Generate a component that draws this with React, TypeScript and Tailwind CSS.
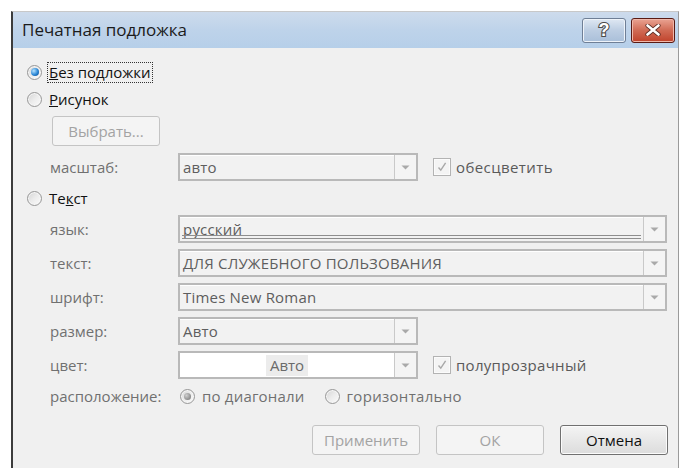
import React from "react";

const FONT = "font-['Open_Sans','Noto_Sans',sans-serif]";

function Radio({ checked = false, disabled = false }: { checked?: boolean; disabled?: boolean }) {
  return (
    <span className="flex h-[15px] w-[15px] shrink-0 items-center justify-center rounded-full border border-[#979797] bg-gradient-to-br from-[#d4d4d4] via-[#ececec] to-[#fbfbfb] shadow-[inset_0_0_0_1px_#f6f6f6]">
      {checked &&
        (disabled ? (
          <span className="h-[7px] w-[7px] rounded-full bg-[radial-gradient(circle_at_35%_35%,#cfcfcf,#8c8c8c_70%,#6e6e6e)]" />
        ) : (
          <span className="h-[8px] w-[8px] rounded-full bg-[radial-gradient(circle_at_35%_35%,#b7e3ff,#2a87d6_55%,#0d3f7e)]" />
        ))}
    </span>
  );
}

function Check() {
  return (
    <span className="flex h-[18px] w-[18px] shrink-0 items-center justify-center border border-[#b3b3b3] bg-[#f4f4f4] shadow-[inset_0_0_0_1px_#fbfbfb]">
      <svg width="12" height="12" viewBox="0 0 12 12">
        <path d="M2.5 6.5 L4.8 9.2 L9.6 1.8" fill="none" stroke="#a8a8a8" strokeWidth="1.4" />
      </svg>
    </span>
  );
}

function Arrow() {
  return (
    <span className="flex w-[22px] shrink-0 items-center justify-center border-l border-[#c9c9c9] bg-[#f4f4f4]">
      <svg width="9" height="5" viewBox="0 0 9 5">
        <path d="M0.5 0.5 H8.5 L4.5 4.5 Z" fill="#a9a9a9" />
      </svg>
    </span>
  );
}

function Combo({
  wide = false,
  text,
  white = false,
  lined = false,
}: {
  wide?: boolean;
  text: string;
  white?: boolean;
  lined?: boolean;
}) {
  return (
    <div
      className={`flex h-[28px] shrink-0 border-2 border-[#b9b9b9] ${wide ? "w-[489px]" : "w-[240px]"} ${
        white ? "bg-white" : "bg-[#f2f2f2]"
      }`}
    >
      <div className="relative flex min-w-0 flex-1 items-center shadow-[inset_0_1px_0_#ffffff]">
        {white ? (
          <span className="mx-auto bg-[#ececec] px-[4px] text-[15px] leading-[21px] text-[#6a6a6a]">{text}</span>
        ) : (
          <span className="pl-[3px] text-[15px] leading-[21px] tracking-[0.2px] text-[#5e5e5e]">{text}</span>
        )}
        {lined && (
          <span className="absolute bottom-[2px] left-[2px] right-[2px] h-[4px] border-y border-[#8e8e8e]" />
        )}
      </div>
      <Arrow />
    </div>
  );
}

function Btn({ label, enabled = false }: { label: string; enabled?: boolean }) {
  return (
    <div
      className={`flex h-[30px] w-[108px] items-center justify-center rounded-[3px] border text-[15px] ${
        enabled
          ? "border-[#707070] bg-gradient-to-b from-[#f4f4f4] to-[#dcdcdc] text-[#111111] shadow-[inset_0_0_0_1px_#fbfbfb]"
          : "border-[#c4c4c4] bg-[#f4f4f4] text-[#a3a3a3]"
      }`}
    >
      {label}
    </div>
  );
}

function Label({ children }: { children: React.ReactNode }) {
  return <span className="w-[128px] shrink-0 text-[15px] text-[#707070]">{children}</span>;
}

export default function App() {
  return (
    <div className={`h-[468px] w-[680px] overflow-hidden bg-white ${FONT}`}>
      <div className="ml-[11px] mt-[11px] flex h-[470px] w-[668px] flex-col border-l-2 border-r border-t border-l-[#3c3c3c] border-r-[#9a9a9a] border-t-[#c8c8c8] bg-[#f0f0f0]">
        {/* title bar */}
        <div className="flex h-[36px] shrink-0 items-center bg-gradient-to-b from-[#cddbec] via-[#bed3ea] to-[#b6cfe9] pl-[9px] pr-[3px]">
          <span className="text-[17px] text-[#1b1b1b]">Печатная подложка</span>
          <div className="ml-auto flex gap-[5px]">
            <div className="flex h-[25px] w-[44px] items-center justify-center rounded-[3px] border border-[#6f7f96] bg-gradient-to-b from-[#dfe8f3] via-[#bccde2] to-[#a9bfd9] shadow-[inset_0_0_0_1px_#eef3f9]">
              <svg width="14" height="20" viewBox="0 0 14 20">
                <text
                  x="7"
                  y="16"
                  textAnchor="middle"
                  fontFamily="Liberation Sans, sans-serif"
                  fontWeight="bold"
                  fontSize="18"
                  fill="#ffffff"
                  stroke="#4a4a4a"
                  strokeWidth="2.2"
                  paintOrder="stroke"
                >
                  ?
                </text>
              </svg>
            </div>
            <div className="flex h-[25px] w-[44px] items-center justify-center rounded-[3px] border border-[#5a1b14] bg-gradient-to-b from-[#e9a393] via-[#d06a54] to-[#c0412a] shadow-[inset_0_0_0_1px_#f0b8aa]">
              <svg width="16" height="12" viewBox="0 0 16 12">
                <path d="M2.5 1.5 L13.5 10.5 M13.5 1.5 L2.5 10.5" stroke="#5a2b22" strokeWidth="4.2" strokeLinecap="round" />
                <path d="M2.5 1.5 L13.5 10.5 M13.5 1.5 L2.5 10.5" stroke="#ffffff" strokeWidth="2.6" strokeLinecap="round" />
              </svg>
            </div>
          </div>
        </div>

        {/* body */}
        <div className="flex flex-col pl-[14px] pt-[13px]">
          <div className="flex h-[22px] items-center gap-[5px]">
            <Radio checked />
            <span className="border border-dotted border-[#333333] px-[1px] text-[15px] leading-[19px] text-[#111111]">
              <u>Б</u>ез подложки
            </span>
          </div>

          <div className="mt-[5px] flex h-[22px] items-center gap-[7px]">
            <Radio />
            <span className="text-[15px] text-[#111111]">
              <u>Р</u>исунок
            </span>
          </div>

          <div className="ml-[25px] mt-[6px]">
            <Btn label="Выбрать..." />
          </div>

          <div className="ml-[23px] mt-[7px] flex items-center">
            <Label>масштаб:</Label>
            <Combo text="авто" />
            <div className="ml-[15px] flex items-center gap-[5px]">
              <Check />
              <span className="text-[15px] tracking-[0.4px] text-[#5a5a5a]">обесцветить</span>
            </div>
          </div>

          <div className="mt-[6px] flex h-[22px] items-center gap-[7px]">
            <Radio />
            <span className="text-[15px] text-[#111111]">
              Те<u>к</u>ст
            </span>
          </div>

          <div className="ml-[23px] mt-[6px] flex flex-col gap-[6px]">
            <div className="flex items-center">
              <Label>язык:</Label>
              <Combo wide text="русский" lined />
            </div>
            <div className="flex items-center">
              <Label>текст:</Label>
              <Combo wide text="ДЛЯ СЛУЖЕБНОГО ПОЛЬЗОВАНИЯ" />
            </div>
            <div className="flex items-center">
              <Label>шрифт:</Label>
              <Combo wide text="Times New Roman" />
            </div>
            <div className="flex items-center">
              <Label>размер:</Label>
              <Combo text="Авто" />
            </div>
            <div className="flex items-center">
              <Label>цвет:</Label>
              <Combo text="Авто" white />
              <div className="ml-[15px] flex items-center gap-[5px]">
                <Check />
                <span className="text-[15px] tracking-[0.3px] text-[#5a5a5a]">полупрозрачный</span>
              </div>
            </div>
            <div className="flex h-[22px] items-center">
              <span className="w-[130px] shrink-0 text-[15px] text-[#707070]">расположение:</span>
              <div className="flex items-center gap-[7px]">
                <Radio checked disabled />
                <span className="text-[15px] tracking-[0.2px] text-[#707070]">по диагонали</span>
              </div>
              <div className="ml-[20px] flex items-center gap-[7px]">
                <Radio />
                <span className="text-[15px] tracking-[0.3px] text-[#707070]">горизонтально</span>
              </div>
            </div>
          </div>

          <div className="mt-[18px] flex justify-end gap-[16px] pr-[10px]">
            <Btn label="Применить" />
            <Btn label="ОК" />
            <Btn label="Отмена" enabled />
          </div>
        </div>
      </div>
    </div>
  );
}
